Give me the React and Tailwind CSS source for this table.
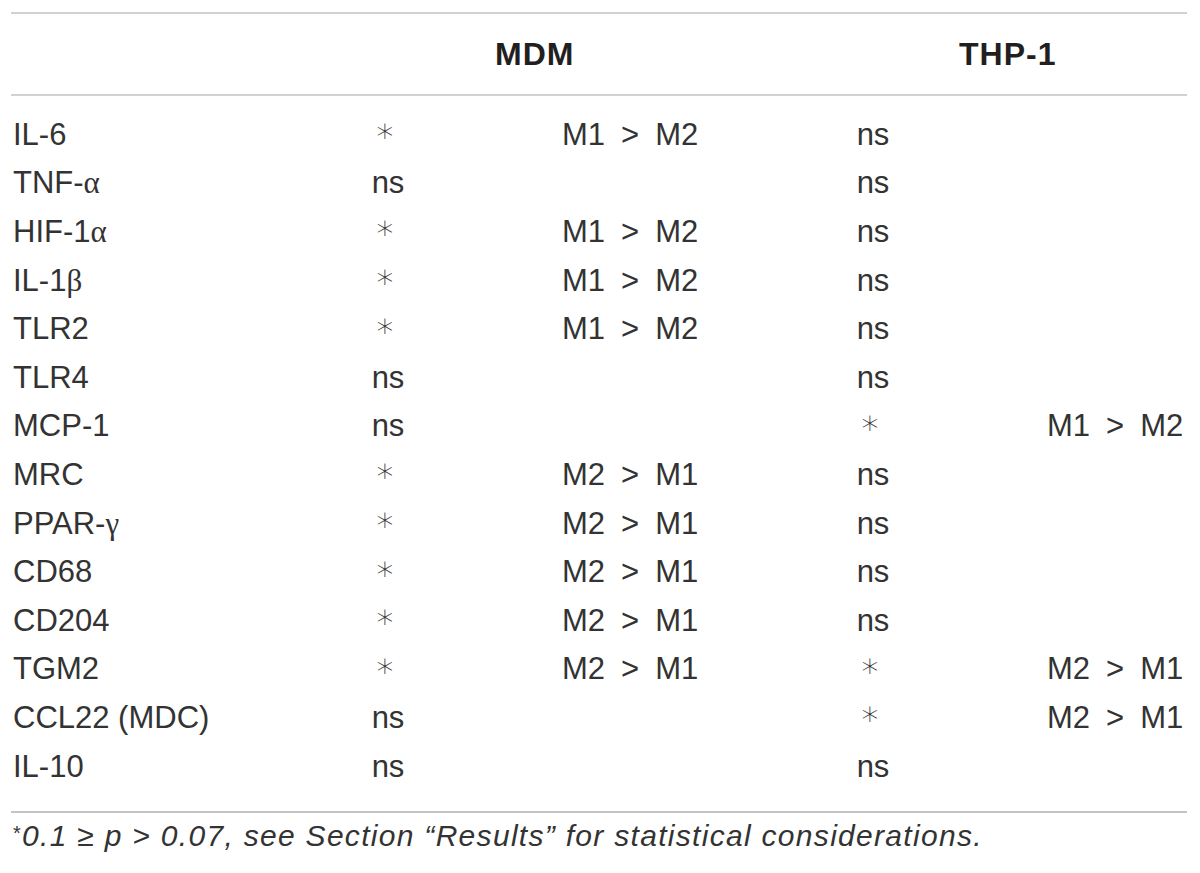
import React from 'react';

const ROWS = [
  { name: 'IL-6', mdm: '*', mdmDir: 'M1 > M2', thp: 'ns', thpDir: '' },
  { name: 'TNF-α', mdm: 'ns', mdmDir: '', thp: 'ns', thpDir: '' },
  { name: 'HIF-1α', mdm: '*', mdmDir: 'M1 > M2', thp: 'ns', thpDir: '' },
  { name: 'IL-1β', mdm: '*', mdmDir: 'M1 > M2', thp: 'ns', thpDir: '' },
  { name: 'TLR2', mdm: '*', mdmDir: 'M1 > M2', thp: 'ns', thpDir: '' },
  { name: 'TLR4', mdm: 'ns', mdmDir: '', thp: 'ns', thpDir: '' },
  { name: 'MCP-1', mdm: 'ns', mdmDir: '', thp: '*', thpDir: 'M1 > M2' },
  { name: 'MRC', mdm: '*', mdmDir: 'M2 > M1', thp: 'ns', thpDir: '' },
  { name: 'PPAR-γ', mdm: '*', mdmDir: 'M2 > M1', thp: 'ns', thpDir: '' },
  { name: 'CD68', mdm: '*', mdmDir: 'M2 > M1', thp: 'ns', thpDir: '' },
  { name: 'CD204', mdm: '*', mdmDir: 'M2 > M1', thp: 'ns', thpDir: '' },
  { name: 'TGM2', mdm: '*', mdmDir: 'M2 > M1', thp: '*', thpDir: 'M2 > M1' },
  { name: 'CCL22 (MDC)', mdm: 'ns', mdmDir: '', thp: '*', thpDir: 'M2 > M1' },
  { name: 'IL-10', mdm: 'ns', mdmDir: '', thp: 'ns', thpDir: '' },
];

// greek letters in the source come from a serif font
function Label({ text }) {
  const parts = text.split(/([αβγ])/);
  return (
    <>
      {parts.map((p, i) =>
        /[αβγ]/.test(p) ? (
          <span key={i} className="font-['Liberation_Serif',serif]">{p}</span>
        ) : (
          <span key={i}>{p}</span>
        )
      )}
    </>
  );
}

function Dir({ text }) {
  if (!text) return null;
  const [a, , b] = text.split(' ');
  return (
    <span className="flex items-center gap-[16px]">
      <span>{a}</span>
      <span>&gt;</span>
      <span>{b}</span>
    </span>
  );
}

function Mark({ v }) {
  if (v === '*') return <span className="relative top-[-4px] left-[-3px] font-['DejaVu_Sans',sans-serif] text-[34px] font-light text-[#333]">∗</span>;
  return <span>{v}</span>;
}

export default function App() {
  return (
    <div className="w-[1200px] h-[873px] bg-white font-['Liberation_Sans',Arial,sans-serif] text-[#333]">
      <div className="pl-[11px] pr-[13px] pt-[12px]">
        <div className="h-[2px] bg-[#d2d2d2]" />

        {/* header */}
        <div className="grid grid-cols-[329px_485px_1fr] h-[80px] items-center text-[32px] font-bold text-[#231f20] leading-none tracking-[1px]">
          <div />
          <div className="pl-[155px]">MDM</div>
          <div className="pl-[134px]">THP-1</div>
        </div>
        <div className="h-[2px] bg-[#d2d2d2]" />

        {/* body */}
        <div className="pt-[14px] pb-[21px]">
          {ROWS.map((r) => (
            <div
              key={r.name}
              className="grid grid-cols-[329px_96px_389px_96px_1fr] h-[48.6px] items-center text-[31px] leading-none"
            >
              <div className="pl-[2px]"><Label text={r.name} /></div>
              <div className="flex justify-center"><Mark v={r.mdm} /></div>
              <div className="pl-[126px]"><Dir text={r.mdmDir} /></div>
              <div className="flex justify-center"><Mark v={r.thp} /></div>
              <div className="pl-[126px]"><Dir text={r.thpDir} /></div>
            </div>
          ))}
        </div>

        <div className="h-[2px] bg-[#c4c4c4]" />
        <p className="pl-[2px] pt-[8px] text-[30px] italic leading-none tracking-[1.3px] text-[#333]">
          <span className="not-italic text-[20px] relative top-[-6px]">*</span>0.1 ≥ p &gt; 0.07, see Section “Results” for statistical considerations.
        </p>
      </div>
    </div>
  );
}
